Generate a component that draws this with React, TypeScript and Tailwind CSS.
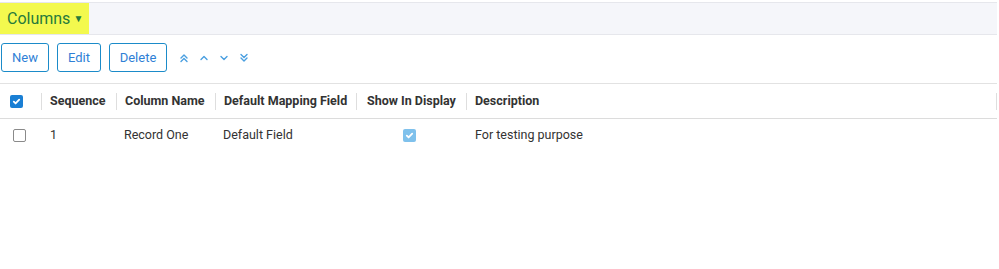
import React from "react";

const Chev = ({ d }: { d: string }) => (
  <svg width="12" height="12" viewBox="0 0 12 12" fill="none" stroke="#4a9fe0" strokeWidth="1.4" strokeLinecap="round" strokeLinejoin="round">
    <path d={d} />
  </svg>
);

export default function App() {
  return (
    <div className="w-[999px] h-[269px] bg-white" style={{ fontFamily: "Roboto, 'Liberation Sans', sans-serif" }}>
      <div className="h-[2px]" />
      <div className="flex h-[33px] w-[997px] items-stretch border-y border-[#e6e7ec] bg-[#f5f6fa]">
        <div className="flex items-center bg-[#f3f94e] pl-[7px] pr-[6px] text-[16px] text-[#267a3c]">
          <span>Columns</span>
          <span className="ml-[3px] text-[10px]">▼</span>
        </div>
      </div>
      <div className="flex items-center gap-2 pl-[1px] pt-[8px]">
        <button className="h-[29px] w-[48px] rounded-[3px] border border-[#1b8bc9] text-[13px] text-[#2f7fd6]">New</button>
        <button className="h-[29px] w-[44px] rounded-[3px] border border-[#1b8bc9] text-[13px] text-[#2f7fd6]">Edit</button>
        <button className="h-[29px] w-[58px] rounded-[3px] border border-[#1b8bc9] text-[13px] text-[#2f7fd6]">Delete</button>
        <div className="ml-[3px] flex items-center gap-[8px]">
          <Chev d="M3 6l3-3 3 3M3 9.5l3-3 3 3" />
          <Chev d="M3 7.5l3-3 3 3" />
          <Chev d="M3 4.5l3 3 3-3" />
          <Chev d="M3 2.5l3 3 3-3M3 6l3 3 3-3" />
        </div>
      </div>
      <div className="mt-[11px] w-[997px] border-t border-[#e2e2e2]">
        <div className="flex h-[35px] items-center border-b border-[#dcdcdc] pt-[1px] text-[12.5px] font-bold text-[#333]">
          <div className="flex w-[41px] items-center pl-[10px]">
            <span className="flex h-[13px] w-[13px] items-center justify-center rounded-[2px] bg-[#1a7fd4]">
              <svg width="9" height="9" viewBox="0 0 10 10" fill="none" stroke="white" strokeWidth="2" strokeLinecap="round" strokeLinejoin="round"><path d="M2 5.2l2 2 4-4.2" /></svg>
            </span>
          </div>
          <div className="flex h-[17px] w-[75px] items-center border-l border-[#dedede] pl-[8px]">Sequence</div>
          <div className="flex h-[17px] w-[99px] items-center border-l border-[#dedede] pl-[8px]">Column Name</div>
          <div className="flex h-[17px] w-[141px] items-center border-l border-[#dedede] pl-[8px]">Default Mapping Field</div>
          <div className="flex h-[17px] w-[110px] items-center border-l border-[#dedede] pl-[10px]">Show In Display</div>
          <div className="flex h-[17px] flex-1 items-center border-l border-[#dedede] pl-[8px]">Description</div>
          <div className="h-[17px] w-0 border-l border-[#dedede]" />
        </div>
        <div className="flex h-[31px] items-center pt-[1px] text-[12.5px] text-[#333]">
          <div className="flex w-[41px] items-center pl-[13px]">
            <span className="h-[13px] w-[13px] rounded-[2px] border border-[#8a8a8a] bg-white" />
          </div>
          <div className="w-[75px] pl-[9px]">1</div>
          <div className="w-[99px] pl-[8px]">Record One</div>
          <div className="w-[141px] pl-[8px]">Default Field</div>
          <div className="flex w-[110px] justify-center">
            <span className="ml-[-4px] flex h-[13px] w-[13px] items-center justify-center rounded-[2px] bg-[#7fc1ec]">
              <svg width="9" height="9" viewBox="0 0 10 10" fill="none" stroke="white" strokeWidth="2" strokeLinecap="round" strokeLinejoin="round"><path d="M2 5.2l2 2 4-4.2" /></svg>
            </span>
          </div>
          <div className="flex-1 pl-[9px]">For testing purpose</div>
        </div>
      </div>
    </div>
  );
}
